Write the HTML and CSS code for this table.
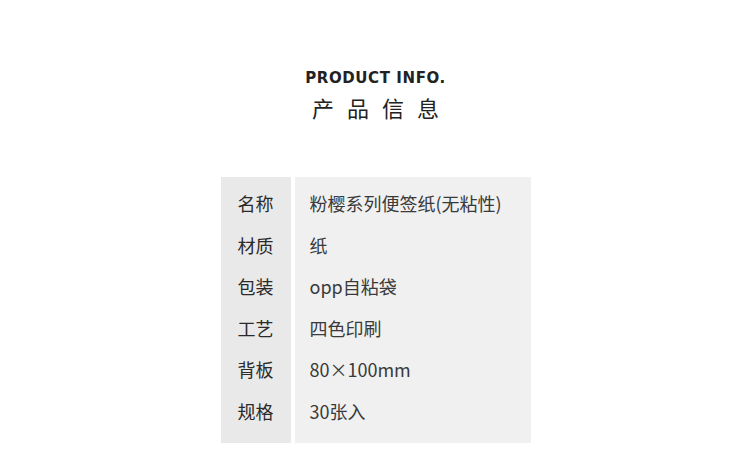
FILE: index.html
```html
<!DOCTYPE html>
<html lang="zh-CN">
<head>
    <meta charset="UTF-8">
    <title>产品信息</title>
    <link rel="stylesheet" href="styles.css">
</head>
<body>
<header class="title">
    <h2 class="title-en">PRODUCT INFO.</h2>
    <h1 class="title-cn">产品信息</h1>
</header>
<section class="info">
    <div class="info-keys">
        <div class="row">名称</div>
        <div class="row">材质</div>
        <div class="row">包装</div>
        <div class="row">工艺</div>
        <div class="row">背板</div>
        <div class="row">规格</div>
    </div>
    <div class="info-values">
        <div class="row">粉樱系列便签纸(无粘性)</div>
        <div class="row">纸</div>
        <div class="row">opp自粘袋</div>
        <div class="row">四色印刷</div>
        <div class="row">80×100mm</div>
        <div class="row">30张入</div>
    </div>
</section>
</body>
</html>
```

FILE: styles.css
```css
body {
    margin: 0;
    background: #fff;
    color: #333;
    font-family: "Noto Sans CJK SC", "Noto Sans", sans-serif;
}
.title {
    padding-top: 66px;
    text-align: center;
}
.title-en {
    margin: 0;
    font-family: "DejaVu Sans", sans-serif;
    font-size: 15px;
    font-weight: bold;
    letter-spacing: 0.6px;
    line-height: 24px;
    color: #222;
}
.title-cn {
    margin: 2px 0 0;
    font-size: 22px;
    font-weight: normal;
    letter-spacing: 13px;
    padding-left: 13px;
    line-height: 30px;
    color: #222;
}
.info {
    display: flex;
    gap: 4px;
    width: 310px;
    margin: 55px auto 0;
}
.info-keys,
.info-values {
    padding: 6px 0 10px;
    font-size: 18px;
}
.info-keys {
    width: 70px;
    background: #e9e9e9;
    text-align: center;
    color: #2a2a2a;
}
.info-values {
    flex: 1;
    background: #f0f0f0;
    padding-left: 15px;
    color: #3a3a3a;
}
.row {
    height: 41.6px;
    line-height: 41.6px;
}
```
